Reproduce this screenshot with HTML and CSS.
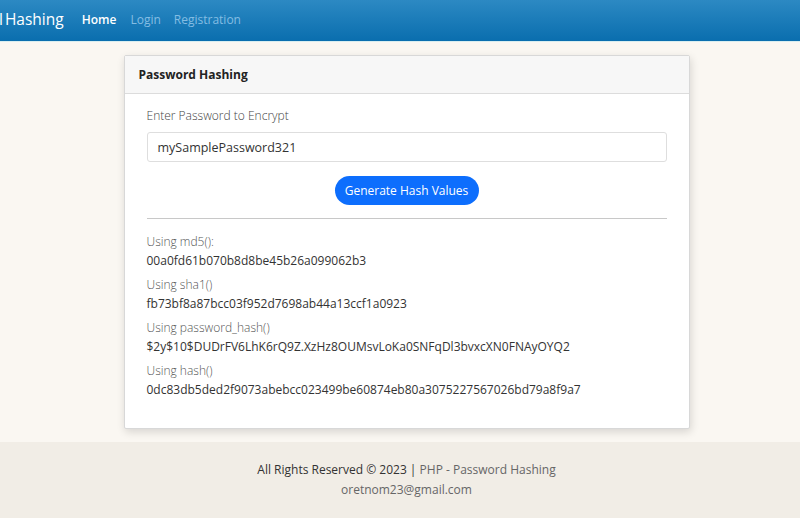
FILE: index.html
```html
<!DOCTYPE html>
<html lang="en">
<head>
<meta charset="utf-8">
<title>PHP - Password Hashing</title>
<link rel="stylesheet" href="styles.css">
</head>
<body>
<nav class="navbar">
  <span class="brand">l Hashing</span>
  <a class="nav-link active" href="#">Home</a>
  <a class="nav-link" href="#">Login</a>
  <a class="nav-link" href="#">Registration</a>
</nav>
<main class="main">
  <div class="card">
    <div class="card-header">Password Hashing</div>
    <div class="card-body">
      <label class="form-label">Enter Password to Encrypt</label>
      <div class="form-control">mySamplePassword321</div>
      <div class="btn-row"><button class="btn">Generate Hash Values</button></div>
      <hr class="divider">
      <div class="result">
        <div class="result-label">Using md5():</div>
        <div class="result-value">00a0fd61b070b8d8be45b26a099062b3</div>
      </div>
      <div class="result">
        <div class="result-label">Using sha1()</div>
        <div class="result-value">fb73bf8a87bcc03f952d7698ab44a13ccf1a0923</div>
      </div>
      <div class="result">
        <div class="result-label">Using password_hash()</div>
        <div class="result-value">$2y$10$DUDrFV6LhK6rQ9Z.XzHz8OUMsvLoKa0SNFqDl3bvxcXN0FNAyOYQ2</div>
      </div>
      <div class="result">
        <div class="result-label">Using hash()</div>
        <div class="result-value">0dc83db5ded2f9073abebcc023499be60874eb80a3075227567026bd79a8f9a7</div>
      </div>
    </div>
  </div>
</main>
<footer class="footer">
  <div class="footer-line"><span class="dark">All Rights Reserved © 2023 | </span>PHP - Password Hashing</div>
  <div class="footer-line">oretnom23@gmail.com</div>
</footer>
</body>
</html>
```
FILE: styles.css
```css
* { box-sizing: border-box; }
html, body { margin: 0; padding: 0; }
body {
  font-family: "Open Sans", "Noto Sans", sans-serif;
  background: #faf7f2;
  color: #333;
  font-size: 12px;
  overflow: hidden;
  height: 518px;
}
.navbar {
  height: 42px;
  background: linear-gradient(#2c89c3, #0a6eae);
  border-bottom: 1px solid #d9eef0;
  display: flex;
  align-items: center;
  padding-bottom: 3px;
  white-space: nowrap;
}
.brand {
  color: #fff;
  font-size: 15.5px;
  margin-left: -1px;
  word-spacing: -2px;
  margin-right: 18px;
}
.nav-link {
  color: #84bde3;
  text-decoration: none;
  font-size: 12px;
  margin-right: 13px;
}
.nav-link.active {
  color: #fff;
  font-weight: 600;
  margin-right: 14px;
}
.main {
  display: flex;
  justify-content: center;
  padding: 13px 0 0 13px;
}
.card {
  width: 566px;
  background: #fff;
  border: 1px solid #d8d8d8;
  border-radius: 2px;
  box-shadow: 1px 3px 8px rgba(0, 0, 0, 0.14);
}
.card-header {
  height: 38px;
  background: #f7f7f7;
  border-bottom: 1px solid #dcdcdc;
  font-weight: 700;
  font-size: 12px;
  color: #222;
  padding: 0 14px;
  display: flex;
  align-items: center;
}
.card-body {
  padding: 13px 22px 24px 22px;
}
.form-label {
  display: block;
  font-weight: 300;
  color: #444;
  line-height: 18px;
  margin-bottom: 7px;
}
.form-control {
  height: 30px;
  border: 1px solid #dedede;
  border-radius: 3px;
  padding: 0 10px;
  display: flex;
  align-items: center;
  font-size: 12.5px;
  color: #333;
}
.btn-row {
  display: flex;
  justify-content: center;
  margin-top: 14px;
}
.btn {
  font-family: inherit;
  height: 29px;
  width: 144px;
  background: #0d6efd;
  color: #fff;
  border: none;
  border-radius: 15px;
  font-size: 12px;
  padding: 0;
}
.divider {
  border: none;
  border-top: 1px solid #c8c8c8;
  margin: 13px 0 13px 0;
}
.result { margin-bottom: 4px; }
.result-label {
  font-weight: 300;
  color: #555;
  line-height: 19px;
}
.result-value {
  color: #333;
  line-height: 20px;
}
.footer {
  margin-top: 13px;
  background: #f1ede6;
  height: 90px;
  padding: 18px 0 0 13px;
  text-align: center;
  color: #666;
  font-size: 12px;
}
.footer-line { line-height: 20px; }
.dark { color: #333; }
```
